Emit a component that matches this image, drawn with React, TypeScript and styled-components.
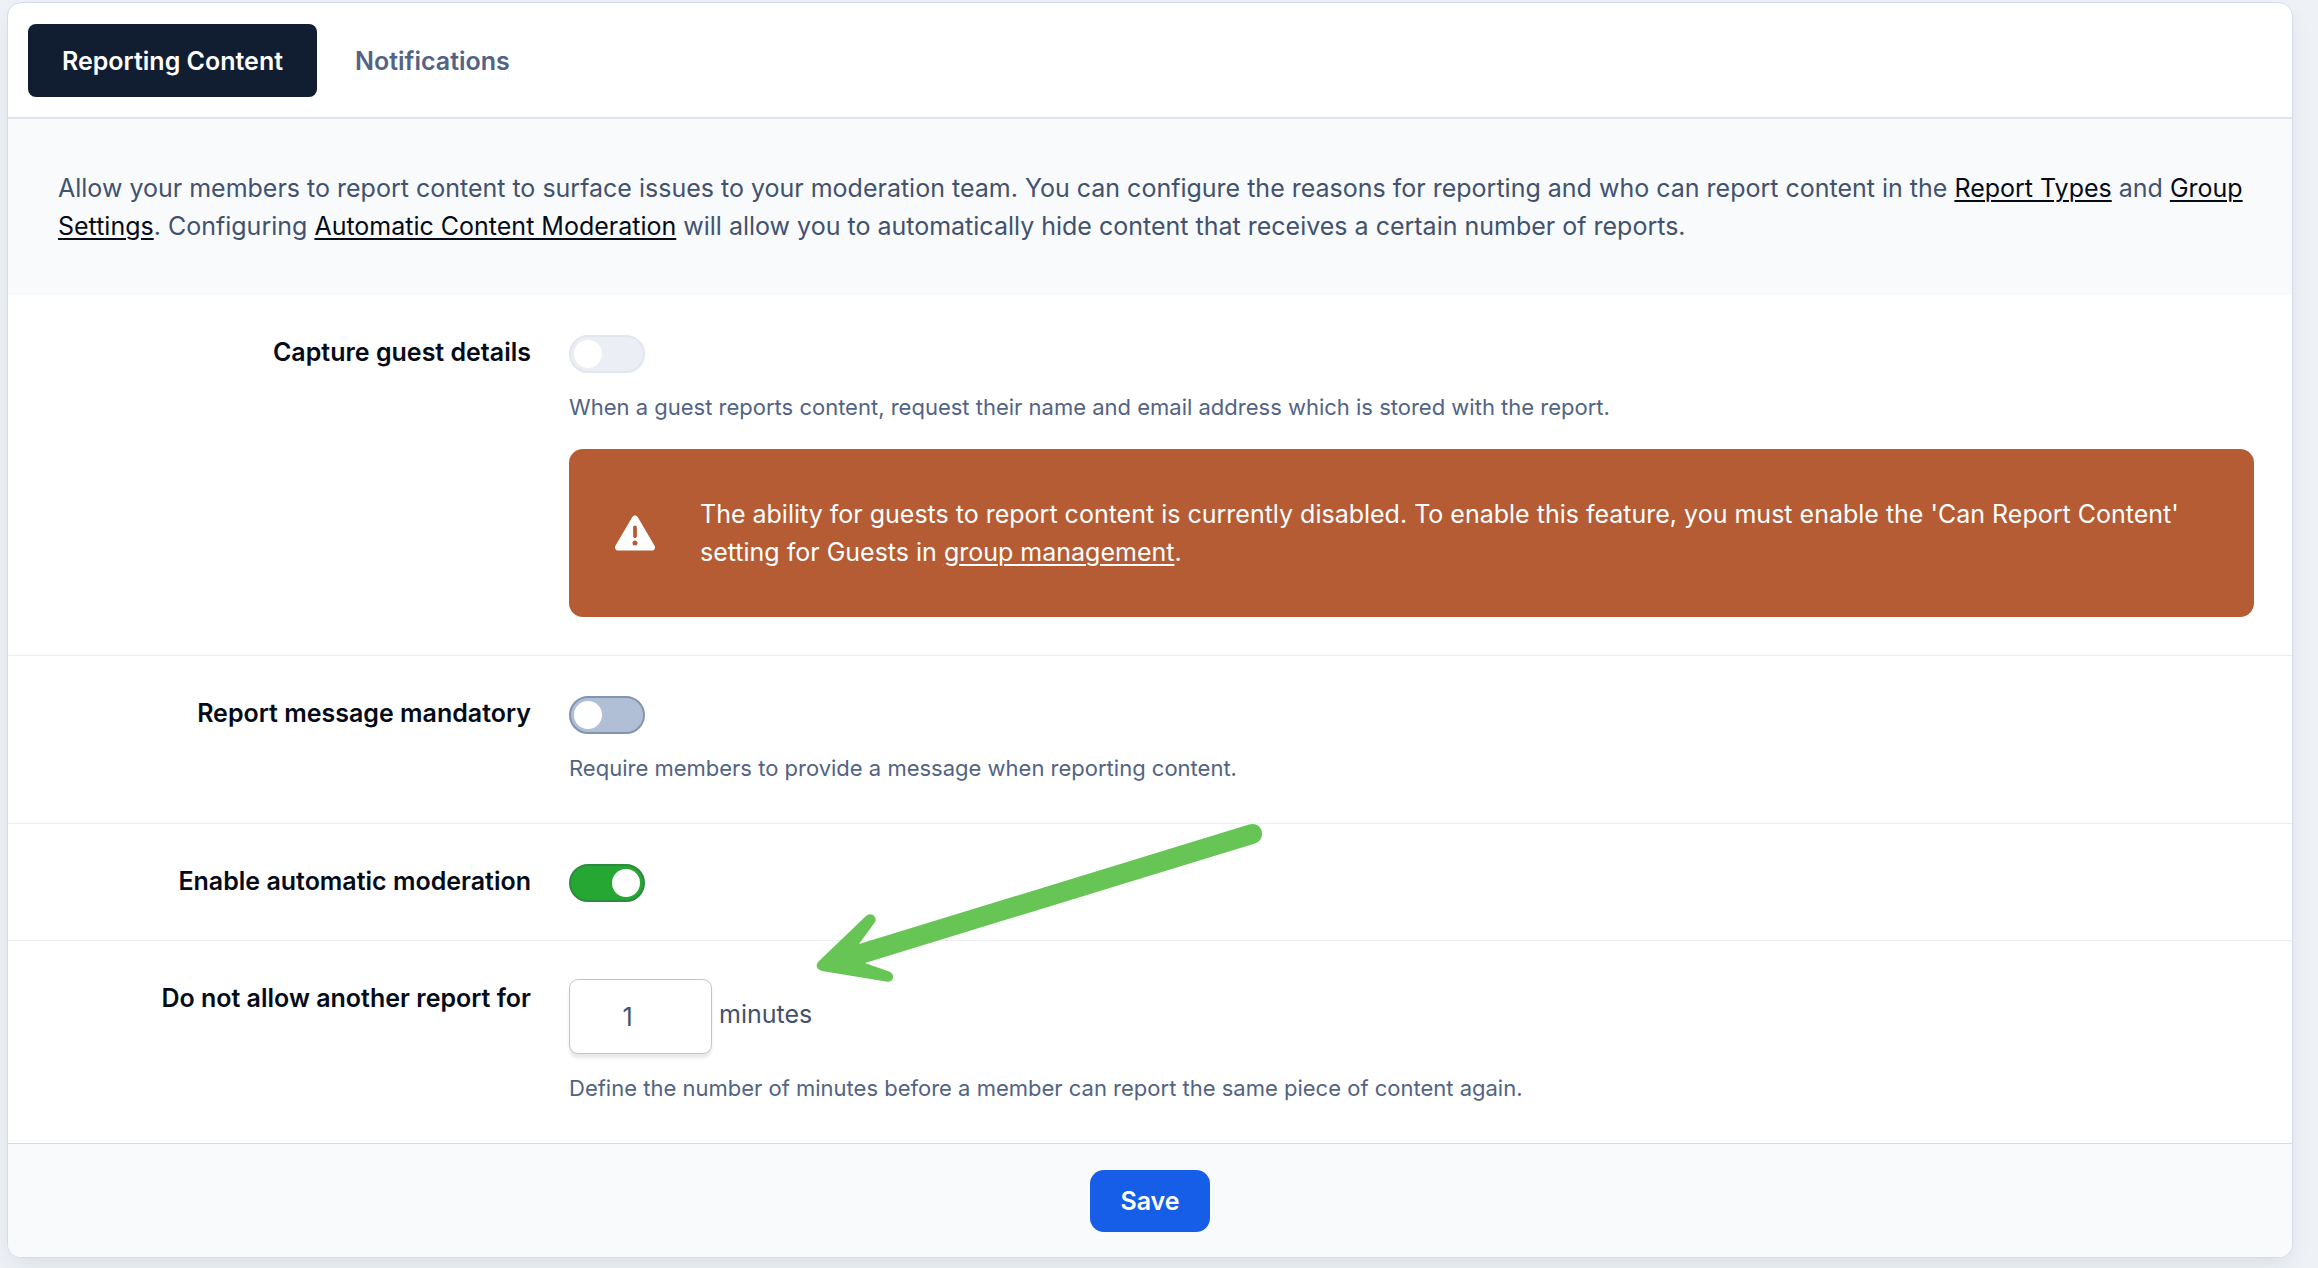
import React, { useState } from "react";
import styled, { createGlobalStyle } from "styled-components";
import { FaTriangleExclamation } from "react-icons/fa6";

const GlobalStyle = createGlobalStyle`
  *, *::before, *::after { box-sizing: border-box; }
  body {
    margin: 0;
    background: #eef2f7;
    color: #42526e;
    font-family: Inter, "Liberation Sans", sans-serif;
    font-size: 25px;
    line-height: 38px;
  }
  button, input { font: inherit; }
`;

const Page = styled.main`
  padding: 2px 25px 10px 7px;
`;

const Panel = styled.form`
  position: relative;
  background: #fff;
  border: 1px solid #d3dce8;
  border-radius: 14px;
  box-shadow: 0 10px 24px -4px rgba(17, 29, 48, 0.09);
`;

const TabBar = styled.nav`
  display: flex;
  gap: 4px;
  padding: 21px 20px 20px;
  border-bottom: 2px solid #dfe4ec;
`;

const Tab = styled.button<{ $active: boolean }>`
  height: 73px;
  padding: 0 34px;
  border: 0;
  border-radius: 8px;
  background: ${(p) => (p.$active ? "#111d30" : "transparent")};
  color: ${(p) => (p.$active ? "#fff" : "#526384")};
  font-weight: 600;
  cursor: pointer;
`;

const Intro = styled.p`
  margin: 0;
  padding: 50px 38px 50px 50px;
  background: #f8fafc;
`;

const TextLink = styled.a`
  color: #050b18;
  text-decoration: underline;
  text-decoration-thickness: 2px;
  text-underline-offset: 3px;
`;

const Row = styled.div`
  display: grid;
  grid-template-columns: minmax(0, 485px) minmax(0, 1fr);
  column-gap: 38px;
  padding: 38px;
  & + & { border-top: 1px solid #eceef1; }
`;

const RowLabel = styled.label`
  color: #050b18;
  font-weight: 600;
  text-align: right;
`;

const Field = styled.div`
  display: flex;
  flex-direction: column;
  align-items: flex-start;
`;

const Switch = styled.input`
  appearance: none;
  display: flex;
  align-items: center;
  width: 76px;
  height: 38px;
  margin: 2px 0 0;
  padding: 0 3px;
  border: 2px solid #8494b0;
  border-radius: 19px;
  background: #b0bfd6;
  cursor: pointer;

  &::before {
    content: "";
    width: 28px;
    height: 28px;
    border-radius: 50%;
    background: #fff;
  }
  &:checked {
    justify-content: flex-end;
    border-color: #2d8a41;
    background: #26a733;
  }
  &:disabled {
    border-color: #e2e6ed;
    background: #ebeef4;
    cursor: default;
  }
`;

const Hint = styled.p`
  margin: 17px 0 0;
  color: #526384;
  font-size: 22px;
  line-height: 34px;
`;

const Alert = styled.div`
  display: flex;
  align-items: center;
  gap: 45px;
  width: 100%;
  margin-top: 25px;
  padding: 46px;
  border-radius: 14px;
  background: #b55c34;
  color: #fff;

  svg { flex: none; }
  a { color: inherit; }
`;

const NumberBox = styled.input`
  width: 143px;
  height: 75px;
  padding: 0 46px 0 20px;
  border: 1px solid #bfc5d3;
  border-radius: 9px;
  background: #fff;
  box-shadow: 0 4px 3px rgba(0, 0, 0, 0.09);
  color: #42526e;
  text-align: center;
  vertical-align: middle;
  appearance: textfield;

  &::-webkit-inner-spin-button { appearance: none; }
`;

const Footer = styled.footer`
  display: flex;
  justify-content: center;
  padding: 26px 20px 25px;
  border-top: 1px solid #d3dce8;
  border-radius: 0 0 13px 13px;
  background: #f8fafc;
`;

const SaveButton = styled.button`
  height: 62px;
  padding: 0 30px;
  border: 0;
  border-radius: 14px;
  background: #165de8;
  color: #fff;
  font-weight: 600;
  cursor: pointer;
`;

const Arrow = styled.svg`
  position: absolute;
  left: 808px;
  top: 820px;
  pointer-events: none;
`;

const tabs = ["Reporting Content", "Notifications"];

export default function App() {
  const [activeTab, setActiveTab] = useState(tabs[0]);
  const [minutes, setMinutes] = useState("1");

  return (
    <>
      <GlobalStyle />
      <Page>
        <Panel onSubmit={(e) => e.preventDefault()}>
          <TabBar>
            {tabs.map((tab) => (
              <Tab key={tab} type="button" $active={tab === activeTab} onClick={() => setActiveTab(tab)}>
                {tab}
              </Tab>
            ))}
          </TabBar>

          <Intro>
            Allow your members to report content to surface issues to your moderation team. You can configure the
            reasons for reporting and who can report content in the <TextLink href="#types">Report Types</TextLink> and{" "}
            <TextLink href="#groups">Group Settings</TextLink>. Configuring{" "}
            <TextLink href="#automatic">Automatic Content Moderation</TextLink> will allow you to automatically hide
            content that receives a certain number of reports.
          </Intro>

          <Row>
            <RowLabel htmlFor="guest">Capture guest details</RowLabel>
            <Field>
              <Switch id="guest" type="checkbox" disabled />
              <Hint>When a guest reports content, request their name and email address which is stored with the report.</Hint>
              <Alert>
                <FaTriangleExclamation size={40} aria-hidden />
                <div>
                  The ability for guests to report content is currently disabled. To enable this feature, you must
                  enable the 'Can Report Content' setting for Guests in{" "}
                  <TextLink href="#management">group management</TextLink>.
                </div>
              </Alert>
            </Field>
          </Row>

          <Row>
            <RowLabel htmlFor="message">Report message mandatory</RowLabel>
            <Field>
              <Switch id="message" type="checkbox" />
              <Hint>Require members to provide a message when reporting content.</Hint>
            </Field>
          </Row>

          <Row>
            <RowLabel htmlFor="automod">Enable automatic moderation</RowLabel>
            <Field>
              <Switch id="automod" type="checkbox" defaultChecked />
            </Field>
          </Row>

          <Row>
            <RowLabel htmlFor="minutes">Do not allow another report for</RowLabel>
            <Field>
              <div>
                <NumberBox id="minutes" type="number" value={minutes} onChange={(e) => setMinutes(e.target.value)} />{" "}
                minutes
              </div>
              <Hint>Define the number of minutes before a member can report the same piece of content again.</Hint>
            </Field>
          </Row>

          <Footer>
            <SaveButton type="submit">Save</SaveButton>
          </Footer>

          <Arrow width="450" height="164" viewBox="816 823 450 164" aria-hidden>
            <path
              fill="#67c556"
              d="M818 962 L866 916 Q869 913 873 915 Q877 918 875 922 L859 944 L1249 824.500 Q1258 822 1261.500 830 Q1264 840 1255 843.500 L865 963 L889 971.500 Q894 974 893 978 Q891 983 886 981.500 L822 971 Q814 968 818 962 Z"
            />
          </Arrow>
        </Panel>
      </Page>
    </>
  );
}
